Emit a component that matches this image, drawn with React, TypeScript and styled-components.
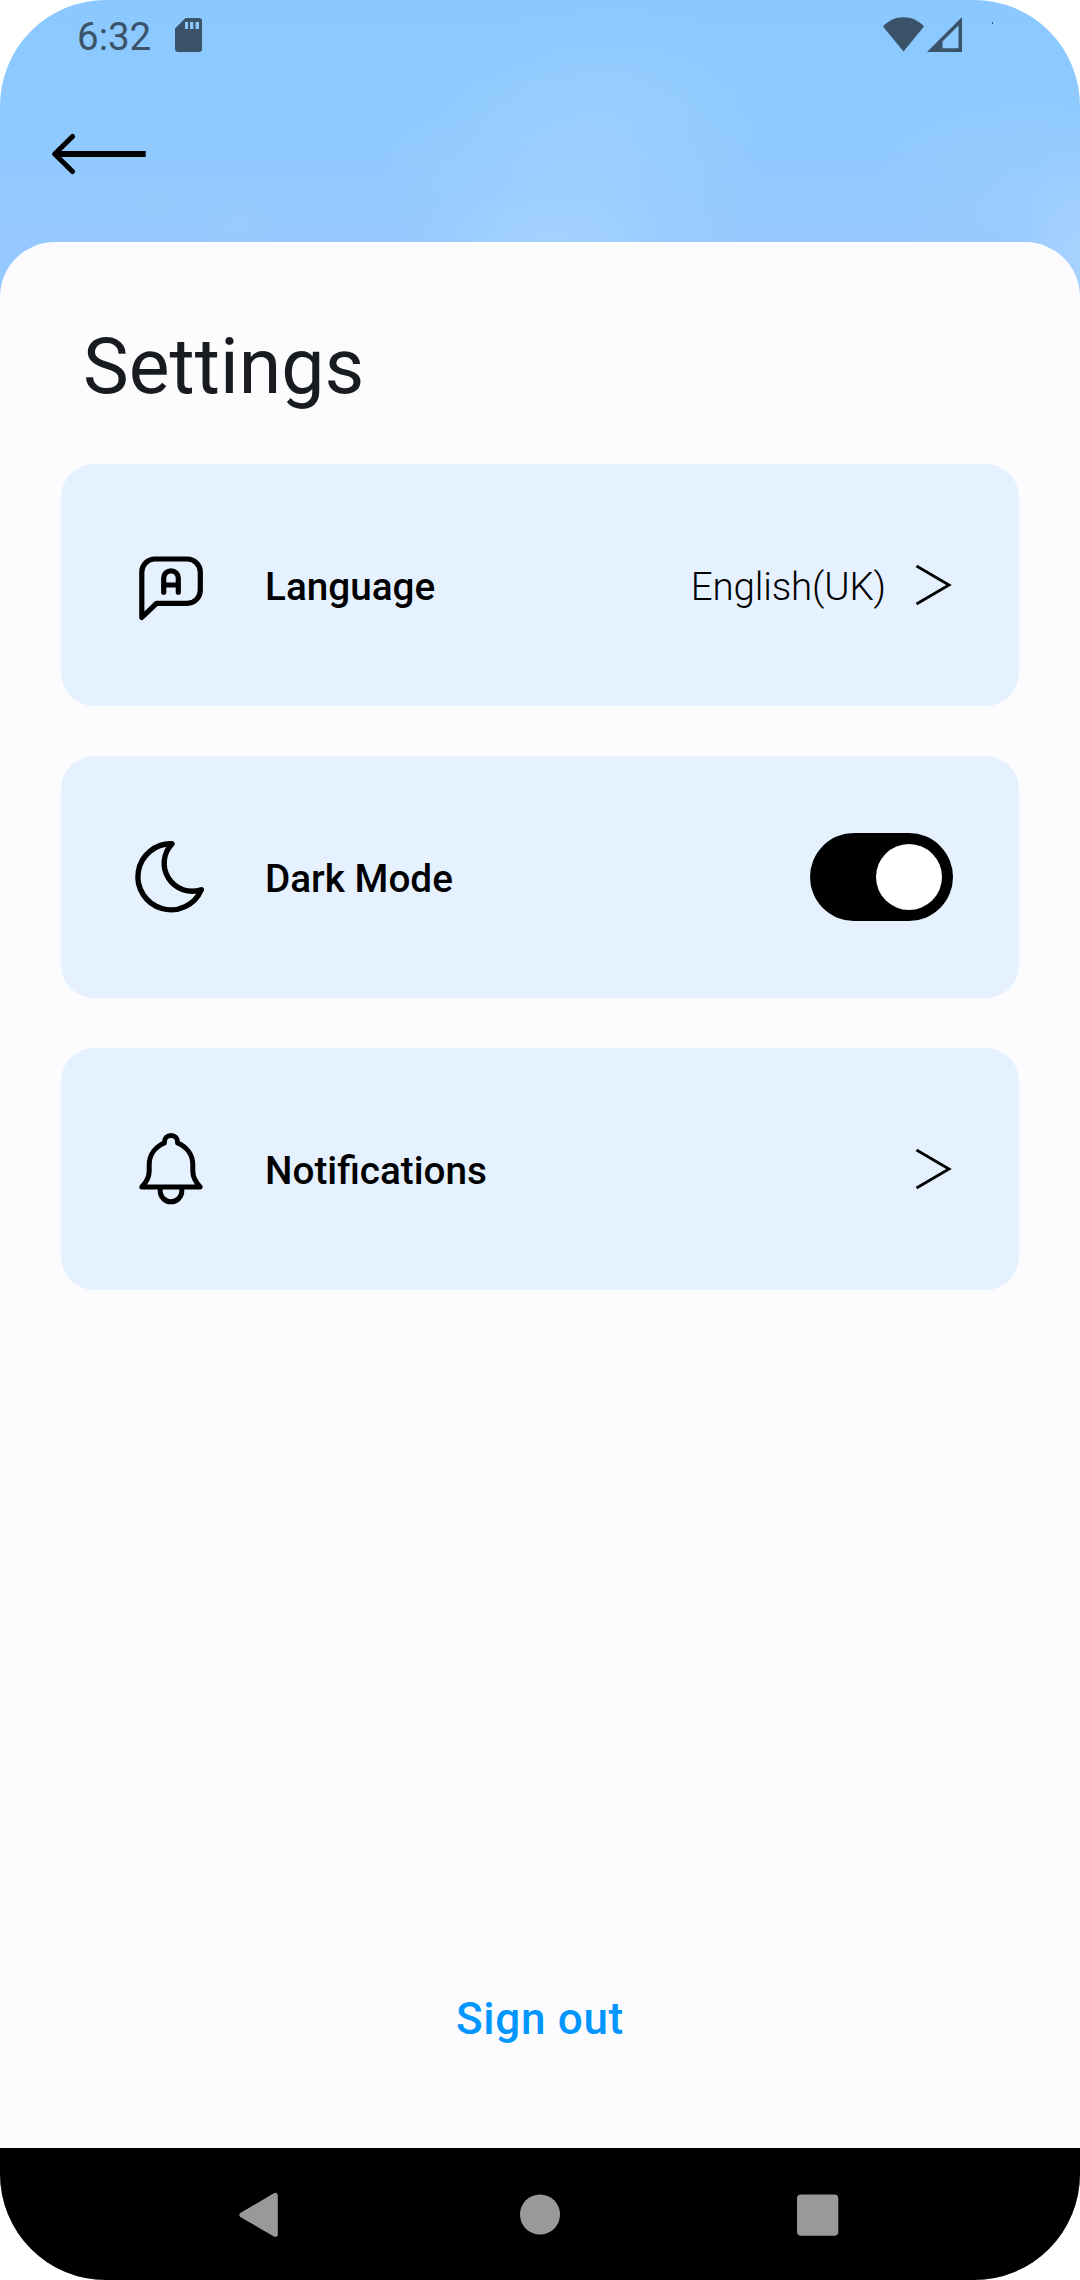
import React, { useState } from "react";
import styled, { createGlobalStyle } from "styled-components";

const GlobalStyle = createGlobalStyle`
  *, *::before, *::after { box-sizing: border-box; }
  body {
    margin: 0;
    background: #ffffff;
    font-family: Roboto, "Liberation Sans", sans-serif;
  }
  button {
    border: 0;
    padding: 0;
    background: none;
    font: inherit;
    color: inherit;
  }
  svg { display: block; flex: none; }
`;

const Screen = styled.div`
  width: 1080px;
  height: 2280px;
  display: flex;
  flex-direction: column;
  overflow: hidden;
  border-radius: 106px;
  background:
    radial-gradient(ellipse 130px 50px at 550px 240px, rgba(176, 218, 255, 0.4), rgba(176, 218, 255, 0) 100%),
    radial-gradient(ellipse 190px 130px at 570px 190px, rgba(168, 212, 255, 0.45) 20%, rgba(168, 212, 255, 0) 100%),
    radial-gradient(ellipse 170px 90px at 610px 95px, rgba(158, 208, 255, 0.4) 20%, rgba(158, 208, 255, 0) 100%),
    radial-gradient(ellipse 46px 32px at 240px 222px, rgba(162, 208, 255, 0.25), rgba(162, 208, 255, 0) 100%),
    radial-gradient(ellipse 34px 20px at 155px 202px, rgba(162, 208, 255, 0.2), rgba(162, 208, 255, 0) 100%),
    radial-gradient(ellipse 70px 120px at 1080px 260px, rgba(178, 216, 255, 0.6), rgba(178, 216, 255, 0) 100%),
    radial-gradient(ellipse 150px 110px at 1030px 190px, rgba(160, 206, 255, 0.45), rgba(160, 206, 255, 0) 100%),
    linear-gradient(#8ac8ff 0, #8ecaff 110px, #96c9ff 242px, #96c9ff 100%);
`;

const StatusBar = styled.header`
  height: 66px;
  display: flex;
  justify-content: space-between;
  padding: 0 87px 0 77px;
  color: #3b5369;
`;

const StatusGroup = styled.div<{ $gap: number }>`
  display: flex;
  align-items: flex-start;
  gap: ${(p) => p.$gap}px;
`;

const StatusIcon = styled.span<{ $top: number }>`
  display: flex;
  margin-top: ${(p) => p.$top}px;
`;

const Clock = styled.span`
  margin-top: 12px;
  width: 77px;
  font-size: 38.5px;
  line-height: 50px;
  white-space: nowrap;
`;

const BatteryDot = styled.span`
  width: 1px;
  height: 2px;
  margin: 22px 0 0 27px;
  background: #3b5369;
`;

const TopBar = styled.nav`
  height: 176px;
  display: flex;
  align-items: center;
  padding: 0 50px;
`;

const BackButton = styled.button`
  display: flex;
`;

const Sheet = styled.main`
  flex: 1;
  display: flex;
  flex-direction: column;
  padding: 80px 61px 96px;
  border-radius: 55px 55px 0 0;
  background: #fcfcff;
`;

const Title = styled.h1`
  margin: 0 0 52px 22px;
  font-size: 77px;
  font-weight: 400;
  line-height: 90px;
  color: #191c1e;
`;

const CardList = styled.div`
  display: flex;
  flex-direction: column;
  gap: 50px;
`;

const Card = styled.section`
  height: 242px;
  display: flex;
  align-items: center;
  padding: 0 66px 0 70px;
  border-radius: 33px;
  background: #e5f1ff;
  color: #000000;
`;

const CardLabel = styled.span`
  flex: 1;
  padding-top: 3px;
  margin-left: 54px;
  font-size: 38.7px;
  font-weight: 500;
  line-height: 50px;
`;

const CardValue = styled.span`
  padding-top: 3px;
  margin-right: 27px;
  font-size: 38.5px;
  font-weight: 300;
  line-height: 50px;
  letter-spacing: -0.15px;
`;

const Toggle = styled.button<{ $on: boolean }>`
  width: 143px;
  height: 88px;
  display: flex;
  align-items: center;
  justify-content: ${(p) => (p.$on ? "flex-end" : "flex-start")};
  padding: 11px;
  border-radius: 44px;
  background: ${(p) => (p.$on ? "#000000" : "#8a8f94")};
`;

const Knob = styled.span`
  width: 66px;
  height: 66px;
  border-radius: 50%;
  background: #ffffff;
`;

const SignOut = styled.button`
  align-self: center;
  margin-top: auto;
  font-size: 44px;
  font-weight: 500;
  line-height: 66px;
  letter-spacing: 0.7px;
  color: #0096ff;
`;

const NavBar = styled.footer`
  height: 132px;
  display: flex;
  align-items: center;
  justify-content: space-between;
  padding: 1px 232px 0;
  background: #000000;
`;

const SdCardIcon = () => (
  <svg width="28" height="35" viewBox="0 0 28 35">
    <path
      fill="currentColor"
      fillRule="evenodd"
      d="M10.5 0H24.5a2.6 2.6 0 0 1 2.5 2.6V31.5a2.6 2.6 0 0 1-2.5 2.5H2.5A2.6 2.6 0 0 1 0 31.5V10.5ZM10 4V11H13V4ZM15 4V11H18.3V4ZM20.5 4V11H24V4Z"
    />
  </svg>
);

const WifiIcon = () => (
  <svg width="41" height="35" viewBox="0 0 41 35">
    <path fill="currentColor" d="M20.5 34.5 0 9.5C5.500 3.500 12.500 .3 20.500 .3S35.500 3.500 41 9.500Z" />
  </svg>
);

const SignalIcon = () => (
  <svg width="35" height="35" viewBox="0 0 35 35">
    <path fill="currentColor" fillRule="evenodd" d="M35 0V35H0ZM31.500 8.500 15.500 24.500V31.200H31.500Z" />
  </svg>
);

const BackIcon = () => (
  <svg width="100" height="46" viewBox="0 0 100 46" fill="none" stroke="currentColor">
    <path d="M5 23H95.700" strokeWidth="6" />
    <path d="M22.500 5.500 4.700 23 22.500 40.500" strokeWidth="5.200" strokeLinecap="round" strokeLinejoin="round" />
  </svg>
);

const LanguageIcon = () => (
  <svg width="80" height="80" viewBox="0 0 80 80" fill="none" stroke="currentColor" strokeWidth="5.200" strokeLinejoin="round" strokeLinecap="round">
    <path d="M10.800 72.500V27a13 13 0 0 1 13-13H56.300a13 13 0 0 1 13 13V45.300a13 13 0 0 1-13 13H25.500Z" />
    <path d="M32.700 47.200V33.100a7.300 7.300 0 0 1 14.600 0V47.200M32.700 40H47.300" />
  </svg>
);

const MoonIcon = () => (
  <svg width="80" height="80" viewBox="0 0 80 80" fill="none" stroke="currentColor" strokeWidth="5.400" strokeLinejoin="round">
    <path d="M41 6.800A33 33 0 1 0 70.300 52.700A28 28 0 0 1 41 6.800Z" />
  </svg>
);

const BellIcon = () => (
  <svg width="80" height="80" viewBox="0 0 80 80" fill="none" stroke="currentColor" strokeWidth="5" strokeLinejoin="round">
    <path d="M10.800 58C16.500 52 18.200 48 18.200 42V36C18.200 26 24 18 33.400 14V13a6.600 6.600 0 0 1 13.200 0V14C56 18 61.800 26 61.800 36V42C61.800 48 63.500 52 69.200 58Z" />
    <path d="M29.200 59V62a10.800 10.800 0 0 0 21.600 0V59" />
  </svg>
);

const ChevronIcon = () => (
  <svg width="40" height="44" viewBox="0 0 40 44" fill="none" stroke="currentColor" strokeWidth="2.800">
    <path d="M3.500 3 36 22 3.500 41" />
  </svg>
);

const NavBackIcon = () => (
  <svg width="54" height="54" viewBox="0 0 54 54">
    <path d="M10 27 43.200 7.500V46.200Z" fill="#999999" stroke="#999999" strokeWidth="5.200" strokeLinejoin="round" />
  </svg>
);

const NavHomeIcon = () => (
  <svg width="54" height="54" viewBox="0 0 54 54">
    <circle cx="27" cy="26.500" r="20" fill="#999999" />
  </svg>
);

const NavRecentIcon = () => (
  <svg width="54" height="54" viewBox="0 0 54 54">
    <rect x="3" y="6.500" width="41.300" height="41.300" rx="4" fill="#999999" />
  </svg>
);

export default function App() {
  const [dark, setDark] = useState(true);

  return (
    <>
      <GlobalStyle />
      <Screen>
        <StatusBar>
          <StatusGroup $gap={21}>
            <Clock>6:32</Clock>
            <StatusIcon $top={18}>
              <SdCardIcon />
            </StatusIcon>
          </StatusGroup>
          <StatusGroup $gap={3}>
            <StatusIcon $top={17}>
              <WifiIcon />
            </StatusIcon>
            <StatusIcon $top={17}>
              <SignalIcon />
            </StatusIcon>
            <BatteryDot />
          </StatusGroup>
        </StatusBar>
        <TopBar>
          <BackButton aria-label="Back">
            <BackIcon />
          </BackButton>
        </TopBar>
        <Sheet>
          <Title>Settings</Title>
          <CardList>
            <Card>
              <LanguageIcon />
              <CardLabel>Language</CardLabel>
              <CardValue>English(UK)</CardValue>
              <ChevronIcon />
            </Card>
            <Card>
              <MoonIcon />
              <CardLabel>Dark Mode</CardLabel>
              <Toggle
                $on={dark}
                role="switch"
                aria-checked={dark}
                aria-label="Dark Mode"
                onClick={() => setDark(!dark)}
              >
                <Knob />
              </Toggle>
            </Card>
            <Card>
              <BellIcon />
              <CardLabel>Notifications</CardLabel>
              <ChevronIcon />
            </Card>
          </CardList>
          <SignOut>Sign out</SignOut>
        </Sheet>
        <NavBar>
          <NavBackIcon />
          <NavHomeIcon />
          <NavRecentIcon />
        </NavBar>
      </Screen>
    </>
  );
}
